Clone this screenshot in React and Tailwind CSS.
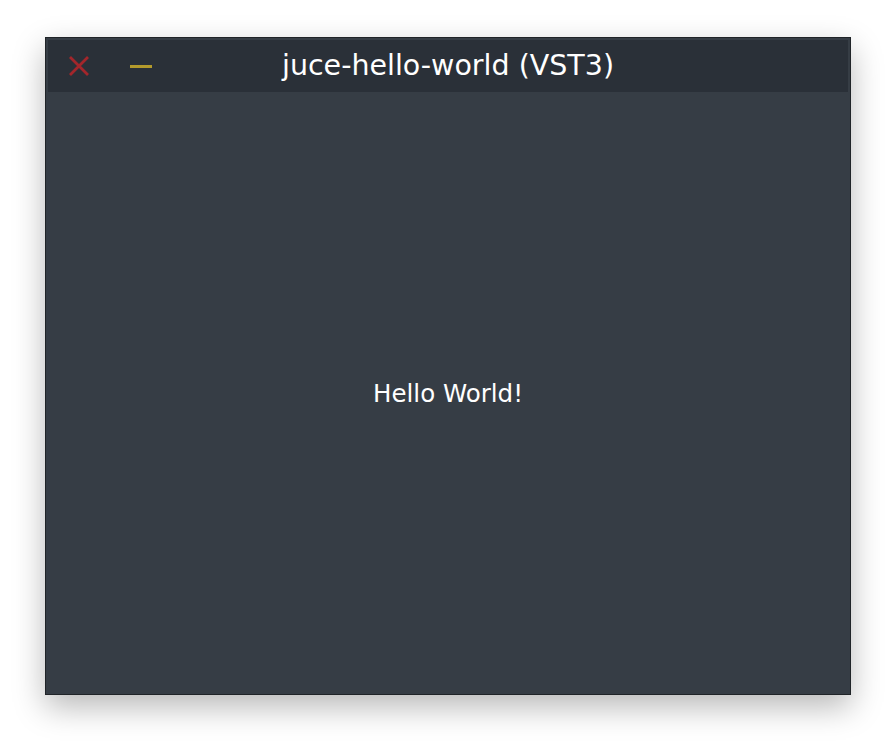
import React from "react";

export default function App() {
  return (
    <div className="w-[896px] h-[748px] bg-white pt-[37px] pl-[45px]" style={{ fontFamily: '"DejaVu Sans", sans-serif' }}>
      {/* plugin window */}
      <div className="w-[806px] h-[658px] flex flex-col border border-[#202428] bg-[#363d45] p-[2px] shadow-[0_12px_30px_rgba(0,0,0,0.28)]">
        {/* title bar */}
        <div className="h-[52px] grid grid-cols-[1fr_auto_1fr] items-center bg-[#2a3038]">
          <div className="flex items-center pl-[21px] gap-[41px]">
            <svg width="20" height="20" viewBox="0 0 20 20">
              <path d="M1 1 L19 19 M19 1 L1 19" stroke="#a3262b" strokeWidth="2.8" />
            </svg>
            <div className="w-[22px] h-[3px] bg-[#b39a2c]" />
          </div>
          <div className="text-white text-[28.5px] leading-none pt-[1px]">juce-hello-world (VST3)</div>
          <div />
        </div>
        {/* content */}
        <div className="flex-1 flex items-center justify-center pt-[4px]">
          <span className="text-white text-[24.5px]">Hello World!</span>
        </div>
      </div>
    </div>
  );
}
